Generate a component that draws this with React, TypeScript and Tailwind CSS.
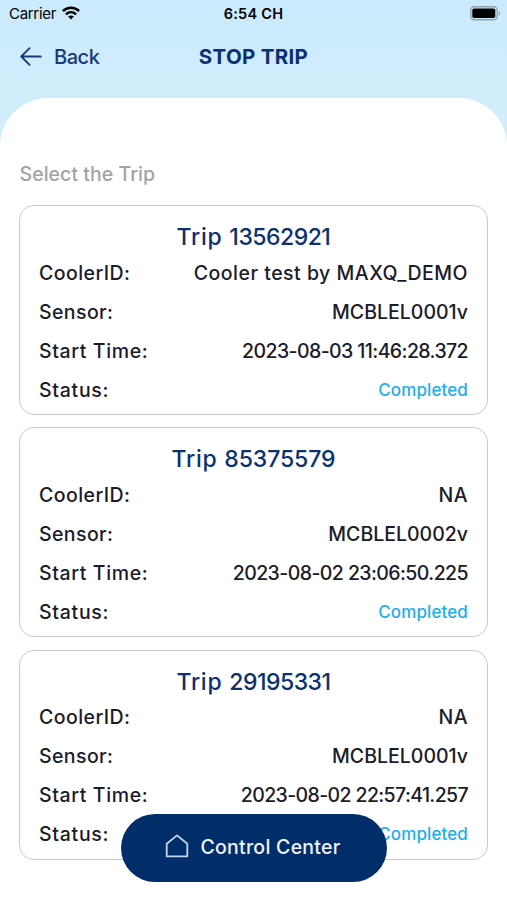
import React from 'react';

interface Trip {
  id: string;
  idClass: string;
  coolerId: string;
  coolerClass: string;
  sensor: string;
  startTime: string;
  timeClass: string;
  status: string;
}

const TRIPS: Trip[] = [
  {
    id: '13562921',
    idClass: 'tracking-[-0.5px]',
    coolerId: 'Cooler test by MAXQ_DEMO',
    coolerClass: 'tracking-[0.5px]',
    sensor: 'MCBLEL0001v',
    startTime: '2023-08-03 11:46:28.372',
    timeClass: 'tracking-[-0.59px]',
    status: 'Completed',
  },
  {
    id: '85375579',
    idClass: 'tracking-[-0.1px]',
    coolerId: 'NA',
    coolerClass: 'tracking-[0.5px]',
    sensor: 'MCBLEL0002v',
    startTime: '2023-08-02 23:06:50.225',
    timeClass: 'tracking-[-0.58px]',
    status: 'Completed',
  },
  {
    id: '29195331',
    idClass: 'tracking-[-0.5px]',
    coolerId: 'NA',
    coolerClass: 'tracking-[0.5px]',
    sensor: 'MCBLEL0001v',
    startTime: '2023-08-02 22:57:41.257',
    timeClass: 'tracking-[-0.62px]',
    status: 'Completed',
  },
];

const WifiIcon: React.FC = () => (
  <svg className="-mt-[2px]" width="18" height="14" viewBox="0 0 18 14" fill="none" stroke="#000" strokeWidth="2.5">
    <path d="M0.9 5.1C5.6 0.6 12.4 0.6 17.1 5.1" />
    <path d="M3.9 8.3C6.9 5.5 11.1 5.5 14.1 8.3" />
    <path d="M9 13.4L6.1 10.5C7.8 9 10.2 9 11.9 10.5Z" fill="#000" stroke="none" />
  </svg>
);

const BatteryIcon: React.FC = () => (
  <svg className="-mt-[2px]" width="31" height="15" viewBox="0 0 31 15" fill="none">
    <rect x="0.8" y="0.8" width="26.4" height="12.9" rx="3.6" stroke="#8fa4ae" strokeWidth="1.4" />
    <rect x="2.3" y="2.4" width="23" height="9.7" rx="1.8" fill="#000" />
    <path d="M28.6 4.9C30.6 5.5 30.6 9 28.6 9.6Z" fill="#8fa4ae" />
  </svg>
);

const BackArrow: React.FC = () => (
  <svg className="-mt-[2px]" width="22" height="19" viewBox="0 0 22 19" fill="none" stroke="#17387a" strokeWidth="1.8" strokeLinecap="round" strokeLinejoin="round">
    <path d="M20.8 9.5H1.2M9.6 1.2L1.2 9.5L9.6 17.8" />
  </svg>
);

const HomeIcon: React.FC = () => (
  <svg className="-mt-[5px]" width="24" height="24" viewBox="0 0 24 24" fill="none" stroke="#c6d6ea" strokeWidth="1.8" strokeLinejoin="round">
    <path d="M1.7 9.8L12 1.4L22.3 9.8V22.4H1.7Z" />
  </svg>
);

const TripCard: React.FC<{ trip: Trip }> = ({ trip }) => (
  <section className="h-[210px] rounded-[15px] border-[1.5px] border-[#c9c9c9] bg-white px-[19px] pt-[14px]">
    <h2 className="text-center text-[23px] leading-[34px] font-[450] text-[#0b3170]">
      <span className="tracking-[0.75px]">Trip </span>
      <span className={trip.idClass}>{trip.id}</span>
    </h2>
    <dl className="text-[19.5px] font-[450] text-[#1b1b2b]">
      <div className="flex h-[39px] items-center justify-between">
        <dt className="tracking-[0.45px]">CoolerID:</dt>
        <dd className={trip.coolerClass}>{trip.coolerId}</dd>
      </div>
      <div className="flex h-[39px] items-center justify-between">
        <dt className="tracking-[0.4px]">Sensor:</dt>
        <dd>{trip.sensor}</dd>
      </div>
      <div className="flex h-[39px] items-center justify-between">
        <dt className="tracking-[0.62px]">Start Time:</dt>
        <dd className={trip.timeClass}>{trip.startTime}</dd>
      </div>
      <div className="flex h-[39px] items-center justify-between">
        <dt className="tracking-[0.72px]">Status:</dt>
        <dd className="text-[17px] tracking-[0.12px] text-[#1eaeea]">{trip.status}</dd>
      </div>
    </dl>
  </section>
);

const App: React.FC = () => {
  return (
    <div className="relative h-[900px] w-[507px] overflow-hidden bg-linear-to-b from-[#caeafd] to-[#d3eefb] to-[140px] font-['Inter',sans-serif]">
      <div className="grid h-7 grid-cols-3 items-center pr-[6px] pl-[9px] text-black">
        <div className="flex items-center gap-[6px] text-[15px] tracking-[-0.3px]">
          <span>Carrier</span>
          <WifiIcon />
        </div>
        <span className="pr-[3px] text-center text-[14.5px] font-semibold tracking-[0.25px]">6:54 CH</span>
        <div className="flex justify-end">
          <BatteryIcon />
        </div>
      </div>

      <header className="grid h-[70px] grid-cols-[1fr_auto_1fr] items-start px-5 pt-[15px] text-[#17387a]">
        <button className="flex h-7 items-center gap-[12px] text-[20px] font-[450] tracking-[-0.45px]">
          <BackArrow />
          <span>Back</span>
        </button>
        <h1 className="flex h-7 items-center text-[20.5px] font-bold tracking-[0.3px] text-[#0b2f70]">STOP TRIP</h1>
      </header>

      <main className="h-[802px] rounded-t-[48px] bg-white px-[19px] pt-[61px]">
        <p className="h-[46px] pl-[0.5px] text-[19.5px] leading-[30px] font-[450] tracking-[0.05px] text-[#a3a3a3]">Select the Trip</p>
        <div className="flex flex-col gap-[12.3px]">
          {TRIPS.map((trip) => (
            <TripCard key={trip.id} trip={trip} />
          ))}
        </div>
      </main>

      <button className="absolute top-[814px] left-[121px] flex h-[68px] w-[266px] items-center justify-center gap-[11px] rounded-full bg-[#012d6a] pr-[2px] text-[19.5px] font-[450] tracking-[0.27px] text-[#eef3fa]">
        <HomeIcon />
        <span>Control Center</span>
      </button>
    </div>
  );
};

export default App;
